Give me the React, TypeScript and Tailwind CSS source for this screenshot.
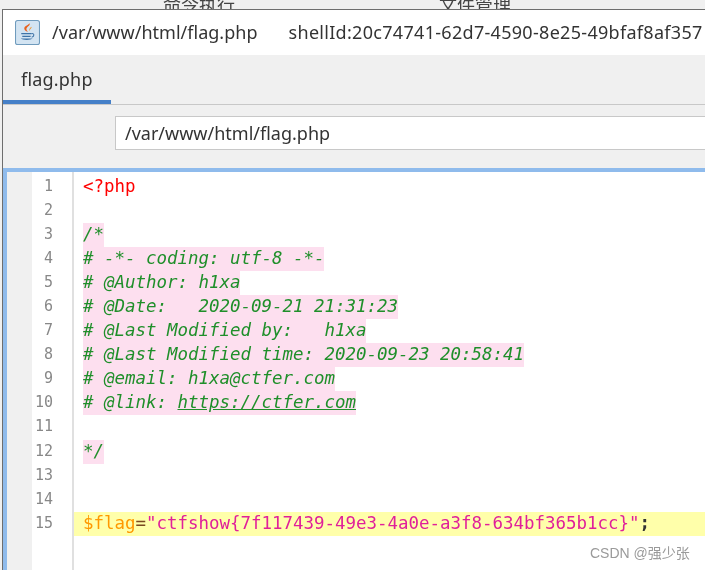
const comment = [
  '/*',
  '# -*- coding: utf-8 -*-',
  '# @Author: h1xa',
  '# @Date:   2020-09-21 21:31:23',
  '# @Last Modified by:   h1xa',
  '# @Last Modified time: 2020-09-23 20:58:41',
  '# @email: h1xa@ctfer.com',
];

function JavaIcon() {
  return (
    <svg width="25" height="25" viewBox="0 0 24 24">
      <rect x="0.5" y="0.5" width="23" height="23" rx="2" fill="#d3e4f2" stroke="#6f9bbd" />
      <path d="M14 3c1 2.500-3.500 3.500-3 6 .2 1 1 1.500 1.500 2.500-3-1-4.500-3-3-5 .9-1.300 3.500-2 4.500-3.500z" fill="#e8601c" />
      <path d="M16 6.500c0 1.800-2.500 2.500-1.500 4.500-1.500-1.500-.8-3.500 1.500-4.500z" fill="#f0952c" />
      <path d="M6 12.500h10v1.200H6zM7 15h8v1.200H7zM5.500 17.800h11.500c-1.500 1.800-10 1.800-11.500 0z" fill="#3f74a8" />
      <path d="M16 13c2.800-.5 2.800 3 0 3.500" fill="none" stroke="#3f74a8" />
    </svg>
  );
}

function Row({ children }: { children?: React.ReactNode }) {
  return <div className="h-[24.1px] pl-[9px] leading-[23px] whitespace-pre">{children}</div>;
}

function Comment({ children }: { children: React.ReactNode }) {
  return <div className="w-fit bg-[#fddfef] pb-[1px] italic text-[#1f8f2a]">{children}</div>;
}

export default function App() {
  return (
    <div className="relative h-[570px] w-[705px] overflow-hidden bg-[#f0f0f0] font-['Noto_Sans',sans-serif] text-[#333] blur-[0.4px]">
      {/* cut off tabs of the window behind */}
      <div className="flex h-[9px] overflow-hidden pl-[163px] text-[18px] leading-[9px] text-[#444] font-['Noto_Sans_CJK_SC',sans-serif]">
        <span className="-mt-[8px] h-[24px] leading-[24px]">命令执行</span>
        <span className="-mt-[8px] ml-[204px] h-[24px] leading-[24px]">文件管理</span>
      </div>

      <div className="ml-[2px] flex h-[561px] flex-col border-l border-t border-[#6e6e6e]">
        {/* title bar */}
        <div className="flex h-[45px] shrink-0 items-center whitespace-nowrap bg-white pl-[12px] text-[18px]">
          <JavaIcon />
          <span className="ml-[12px] tracking-[0.02px]">/var/www/html/flag.php</span>
          <span className="ml-[31px] tracking-[0.3px]">shellId:20c74741-62d7-4590-8e25-49bfaf8af357</span>
        </div>

        {/* tab strip */}
        <div className="flex h-[50px] shrink-0 border-b border-[#c8c8c8]">
          <div className="flex w-[108px] items-center border-b-[4px] border-[#4580c8] pl-[18px] pt-[3px] text-[18px] tracking-[0.2px]">flag.php</div>
        </div>

        {/* path field */}
        <div className="flex h-[63px] shrink-0 pl-[112px] pt-[11px]">
          <div className="flex h-[34px] flex-1 items-center border border-r-0 border-[#c8c8c8] bg-white pl-[9px] text-[18px]">/var/www/html/flag.php</div>
        </div>

        {/* editor */}
        <div className="flex min-h-0 flex-1 border-l-[4px] border-t-[4px] border-[#8fbbec] bg-white font-['DejaVu_Sans_Mono',monospace] text-[17.45px]">
          <div className="w-[25px] shrink-0 bg-[#f0f0f0]" />
          <div className="w-[42px] shrink-0 border-r-2 border-[#e0e0e0] pr-[19px] pt-[2.5px] text-right text-[15px] text-[#888]">
            {Array.from({ length: 15 }, (_, i) => (
              <div key={i} className="h-[24.1px] leading-[23px]">{i + 1}</div>
            ))}
          </div>
          <div className="min-w-0 flex-1 pt-[2.5px]">
            <Row><span className="text-[#ff0000]">&lt;?php</span></Row>
            <Row />
            {comment.map((line) => (
              <Row key={line}><Comment>{line}</Comment></Row>
            ))}
            <Row><Comment># @link: <span className="underline">https://ctfer.com</span></Comment></Row>
            <Row />
            <Row><Comment>*/</Comment></Row>
            <Row />
            <Row />
            <Row>
              <span className="-ml-[9px] block h-[24px] w-[640px] bg-[#ffffaa] pl-[9px]">
                <span className="text-[#ff9900]">$flag</span>
                <span className="text-[#7a4a20]">=</span>
                <span className="text-[#e0209a]">"ctfshow{'{'}7f117439-49e3-4a0e-a3f8-634bf365b1cc{'}'}"</span>
                <span className="font-bold text-[#333]">;</span>
              </span>
            </Row>
          </div>
        </div>
      </div>

      <div className="absolute left-[590px] top-[544px] font-['Liberation_Sans','Noto_Sans_CJK_SC',sans-serif] text-[14px] leading-[18px] text-[#9a9a9a]">CSDN @强少张</div>
    </div>
  );
}
